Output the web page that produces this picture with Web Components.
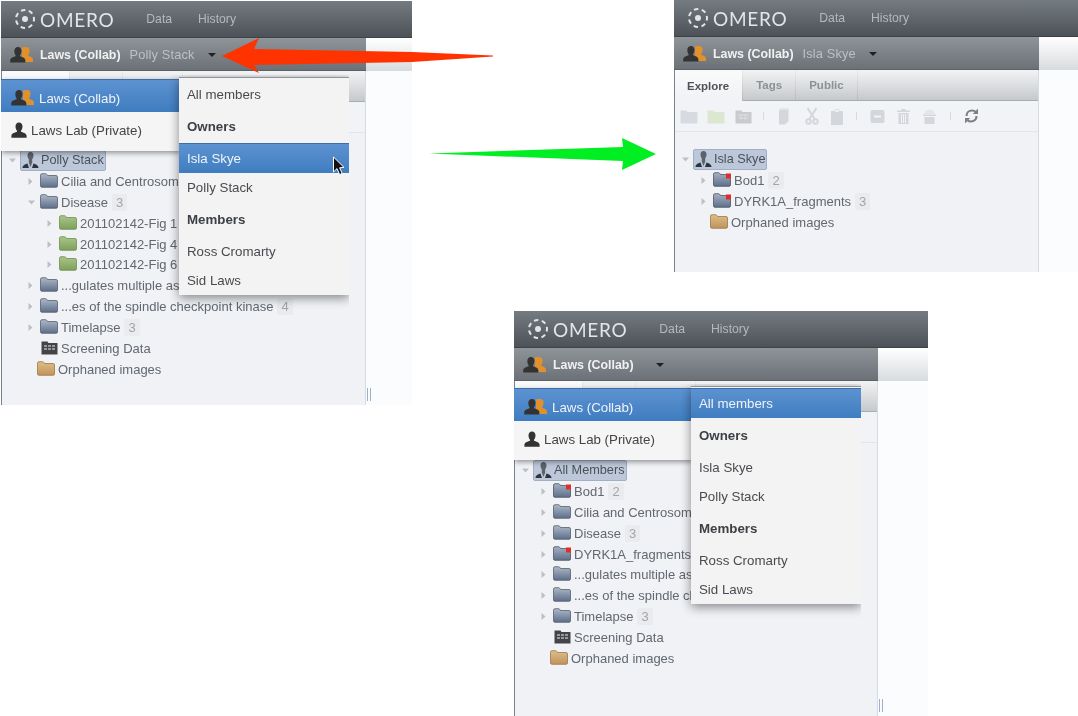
<!DOCTYPE html>
<html>
<head>
<meta charset="utf-8">
<title>OMERO groups</title>
<style>
  html, body { margin: 0; padding: 0; background: #fff; }
  body { font-family: "Liberation Sans", Arial, sans-serif; width: 1078px; height: 716px; overflow: hidden; }
  #desk { position: relative; width: 1078px; height: 716px; overflow: hidden; }
</style>
</head>
<body>
<div id="desk">
  <omero-window style="left:1px;top:1px;width:411px;height:404px" user="Polly Stack" panel="365" covered>
    <tree-row level="0" kind="suit" label="Polly Stack" toggle="open"></tree-row>
    <tree-row level="1" kind="folder" label="Cilia and Centrosom" toggle="closed"></tree-row>
    <tree-row level="1" kind="folder" label="Disease" count="3" toggle="open"></tree-row>
    <tree-row level="2" kind="green" label="201102142-Fig 1" toggle="closed"></tree-row>
    <tree-row level="2" kind="green" label="201102142-Fig 4" toggle="closed"></tree-row>
    <tree-row level="2" kind="green" label="201102142-Fig 6" toggle="closed"></tree-row>
    <tree-row level="1" kind="folder" label="...gulates multiple as" toggle="closed"></tree-row>
    <tree-row level="1" kind="folder" label="...es of the spindle checkpoint kinase" count="4" toggle="closed"></tree-row>
    <tree-row level="1" kind="folder" label="Timelapse" count="3" toggle="closed"></tree-row>
    <tree-row level="1" kind="plate" label="Screening Data"></tree-row>
    <tree-row level="1" kind="orphan" label="Orphaned images"></tree-row>
    <group-menu slot="menu" style="top:41px"></group-menu>
    <member-menu slot="menu" style="left:177px;top:39px" active="Isla Skye"></member-menu>
  </omero-window>

  <omero-window style="left:674px;top:0;width:404px;height:272px" user="Isla Skye" panel="365" nosplit>
    <tree-row level="0" kind="suit" label="Isla Skye" toggle="open"></tree-row>
    <tree-row level="1" kind="tagged" label="Bod1" count="2" toggle="closed"></tree-row>
    <tree-row level="1" kind="tagged" label="DYRK1A_fragments" count="3" toggle="closed"></tree-row>
    <tree-row level="1" kind="orphan" label="Orphaned images"></tree-row>
  </omero-window>

  <omero-window style="left:514px;top:311px;width:414px;height:405px" user="" panel="364" covered>
    <tree-row level="0" kind="suit" label="All Members" toggle="open"></tree-row>
    <tree-row level="1" kind="tagged" label="Bod1" count="2" toggle="closed"></tree-row>
    <tree-row level="1" kind="folder" label="Cilia and Centrosom" toggle="closed"></tree-row>
    <tree-row level="1" kind="folder" label="Disease" count="3" toggle="closed"></tree-row>
    <tree-row level="1" kind="tagged" label="DYRK1A_fragments" toggle="closed"></tree-row>
    <tree-row level="1" kind="folder" label="...gulates multiple as" toggle="closed"></tree-row>
    <tree-row level="1" kind="folder" label="...es of the spindle ch" toggle="closed"></tree-row>
    <tree-row level="1" kind="folder" label="Timelapse" count="3" toggle="closed"></tree-row>
    <tree-row level="1" kind="plate" label="Screening Data"></tree-row>
    <tree-row level="1" kind="orphan" label="Orphaned images"></tree-row>
    <group-menu slot="menu" style="top:40px"></group-menu>
    <member-menu slot="menu" style="left:176px;top:38px" active="All members"></member-menu>
  </omero-window>

  <flow-arrow style="left:222px;top:38px" kind="red"></flow-arrow>
  <flow-arrow style="left:429px;top:138px" kind="green"></flow-arrow>
  <svg style="position:absolute;left:332px;top:156px" width="13" height="20" viewBox="0 0 13 20">
    <path d="M1.500 1 V16 L5 12.600 L7.600 18.600 L10.200 17.400 L7.600 11.800 L12 11.400 Z" fill="#111" stroke="#fff" stroke-width="1"/>
  </svg>
</div>

<script>
const ICONS = {
  person: `<svg width="18" height="17" viewBox="0 0 18 17"><path d="M9 0.500c2.300 0 3.500 1.800 3.500 4 0 1.800-.8 3.300-1.500 4.200v1.100c1.600.8 5.600 1.200 5.600 4.200v1.800H1.400V14c0-3 4-3.400 5.600-4.200V8.700C6.300 7.800 5.500 6.300 5.500 4.500c0-2.200 1.200-4 3.500-4z" fill="#333"/></svg>`,
  group: `<svg width="25" height="18" viewBox="0 0 25 18"><path d="M17.500 1c2 0 3.100 1.700 3.100 3.800 0 1.700-.7 3.100-1.300 4v1c1.300.7 4.700 1.200 4.700 4v2.200H13V1.500C14 1 15.800 1 17.500 1z" fill="#e0912c"/><path d="M9 1c2.300 0 3.500 1.800 3.500 4 0 1.800-.8 3.300-1.500 4.200v1.100c1.600.8 5.400 1.200 5.400 4.200v1.900H1.200v-1.900c0-3 3.800-3.400 5.400-4.200V9.200C5.900 8.300 5.300 6.800 5.300 5c0-2.200 1.400-4 3.700-4z" fill="#333"/></svg>`,
  suit: `<svg width="19" height="19" viewBox="0 0 19 19"><path d="M9.500 1c2 0 3 1.500 3 3.500 0 1.700-.7 3-1.300 3.800v3.200L9.500 16 7.800 11.500V8.300C7.200 7.500 6.500 6.200 6.500 4.500 6.500 2.500 7.500 1 9.500 1z" fill="#5b6269"/><path d="M6.500 12.500 8 17H1.500c0-2.500 2.500-3.700 5-4.500zM12.500 12.500 11 17h6.500c0-2.500-2.500-3.700-5-4.500z" fill="#2f3439"/></svg>`,
  folder: folder('#aeb9c9', '#5d6e89', '#505a69'),
  green: folder('#a9c68a', '#7da05a', '#6a8a4e'),
  orphan: folder('#e0bd88', '#c0935a', '#947343'),
  tagged: folder('#a6b2c3', '#5e6f89', '#454e5c', true),
  plate: `<svg width="17" height="15" viewBox="0 0 17 15"><path d="M0.500 1.500h6l1 1.500h9v11.500h-16z" fill="#434446"/><g fill="#97999b"><rect x="3" y="5" width="3" height="2"/><rect x="7" y="5" width="3" height="2"/><rect x="11" y="5" width="3" height="2"/><rect x="3" y="8" width="3" height="2"/><rect x="7" y="8" width="3" height="2"/><rect x="11" y="8" width="3" height="2"/></g></svg>`
};

function folder(light, dark, line, tag) {
  return `<svg width="18" height="15" viewBox="0 0 18 15">
    <defs><linearGradient id="f" x1="0" y1="0" x2="0" y2="1"><stop offset="0" stop-color="${light}"/><stop offset="1" stop-color="${dark}"/></linearGradient></defs>
    <path d="M.5 2.200q0-1.500 1.500-1.500h3.500q1 0 1.500 1l.5.800h8.500q1.500 0 1.500 1.500v8.800q0 1.500-1.500 1.500H2q-1.500 0-1.500-1.500z" fill="url(#f)" stroke="${line}" stroke-opacity=".75"/>
    ${tag ? '<rect x="13" y="1.500" width="5" height="5" fill="#e02c2c"/>' : ''}
  </svg>`;
}

class OmeroLogo extends HTMLElement {
  constructor() {
    super();
    this.attachShadow({ mode: 'open' }).innerHTML = `
      <style>
        :host { display: flex; align-items: center; gap: 4px; color: #e2e5e7; }
        span { font: 400 19px/1 Lato, "Liberation Sans", sans-serif; letter-spacing: .7px; }
      </style>
      <svg width="22" height="22" viewBox="0 0 22 22">
        <circle cx="11" cy="11" r="9" fill="none" stroke="#e2e5e7" stroke-width="2" stroke-dasharray="4.500 3.500" stroke-dashoffset="2"/>
        <circle cx="11" cy="11" r="3" fill="#e2e5e7"/>
      </svg>
      <span>OMERO</span>`;
  }
}

class OmeroWindow extends HTMLElement {
  constructor() {
    super();
    const user = this.getAttribute('user') || '';
    const panel = this.getAttribute('panel') || 365;
    const grip = this.hasAttribute('nosplit') ? '' : '<i class="grip"></i>';
    // the open menus hide the tab labels, only the tab boxes show past them
    const tabs = this.hasAttribute('covered')
      ? '<div class="on" style="width:68px"></div><div style="width:53px"></div><div style="width:60px"></div>'
      : '<div class="on">Explore</div><div>Tags</div><div>Public</div>';
    this.attachShadow({ mode: 'open' }).innerHTML = `
      <style>
        :host { display: block; position: absolute; overflow: hidden; filter: blur(.45px); font-size: 13.100px; }
        .top { height: 37px; box-sizing: border-box; display: flex; align-items: center; padding-left: 13px;
          background: linear-gradient(#747b81, #4c5258); border-bottom: 1px solid #3d4247; }
        nav { display: flex; gap: 26px; margin-left: 32px; font-size: 12.200px; color: #b4b9be; }
        .main { display: flex; height: calc(100% - 37px); }
        .panel { width: ${panel}px; flex: none; box-sizing: border-box; background: #f0f2f6;
          border-left: 1px solid #77828f; border-right: 1px solid #d6dae1; position: relative; }
        .rest { flex: 1; background: #fbfcfd; position: relative; }
        .rest::before { content: ""; display: block; height: 33px; background: linear-gradient(#fff, #d8dbde); }
        .grip { position: absolute; left: 1px; bottom: 4px; width: 2px; height: 13px;
          border-left: 1px solid #9bb0cc; border-right: 1px solid #9bb0cc; }
        .sub { height: 33px; margin: 0 -1px; padding: 1px 0 0 8px; box-sizing: border-box; display: flex; align-items: center;
          background: linear-gradient(#8f9499, #6c7177); border-bottom: 1px solid #5d6268; font-size: 12.800px; }
        .sub b { margin-left: 6px; color: #f0f1f2; font-size: 12.400px; }
        .sub span { margin-left: 9px; color: #bcc0c4; letter-spacing: .15px; }
        .caret { margin-left: 13px; width: 0; height: 0; border: 4px solid transparent; border-top: 4px solid #1f2123; border-bottom: 0; }
        .tabs { height: 31px; box-sizing: border-box; display: flex; background: linear-gradient(#f2f3f4, #c6c9cc);
          border-bottom: 1px solid #a9acb0; }
        .tabs div { display: flex; align-items: center; box-sizing: border-box; padding: 0 13px; font-size: 11.500px; font-weight: 700;
          color: #8c9197; border-right: 1px solid; border-image: linear-gradient(#eceded, #b4b7bb) 1; }
        .tabs .on { color: #4f5358; background: linear-gradient(#fafafa, #f0f2f5); height: 31px; padding: 0 13px 0 12px; }
        tool-bar { border-bottom: 1px solid #e3e5ea; }
        .tree { padding-top: 17px; }
      </style>
      <div class="top"><omero-logo></omero-logo><nav><span>Data</span><span>History</span></nav></div>
      <div class="main">
        <div class="panel">
          <div class="sub"><omero-icon name="group"></omero-icon><b>Laws (Collab)</b><span>${user}</span><i class="caret"></i></div>
          <div class="tabs">${tabs}</div>
          <tool-bar></tool-bar>
          <div class="tree"><slot></slot></div>
          <slot name="menu"></slot>
        </div>
        <div class="rest">${grip}</div>
      </div>`;
  }
}

class OmeroIcon extends HTMLElement {
  constructor() {
    super();
    this.attachShadow({ mode: 'open' }).innerHTML = `
      <style>:host { display: inline-flex; flex: none; } svg { display: block; }</style>
      ${ICONS[this.getAttribute('name')]}`;
  }
}

class ToolBar extends HTMLElement {
  constructor() {
    super();
    const c = '#d3d6da';
    this.attachShadow({ mode: 'open' }).innerHTML = `
      <style>
        :host { display: flex; align-items: center; height: 30px; padding-left: 5px; background: #f2f3f6; }
        svg { display: block; flex: none; }
        .sep { width: 1px; height: 8px; background: #d8dade; flex: none; }
      </style>
      <svg width="18" height="15" viewBox="0 0 18 15"><path d="M.5 1.500h6l1 1.500h10v11.500H.5z" fill="#d7dbe1"/></svg>
      <svg style="margin-left:9px" width="18" height="15" viewBox="0 0 18 15"><path d="M.5 1.500h6l1 1.500h10v11.500H.5z" fill="#dbe7cf"/></svg>
      <svg style="margin-left:10px" width="17" height="15" viewBox="0 0 17 15"><path d="M.5 1.500h6l1 1.500h9v11.500H.5z" fill="#c8cacc"/><path d="M3 6h11M3 9h11M6 5v6M10 5v6" stroke="#dcdde0"/></svg>
      <i class="sep" style="margin-left:11px"></i>
      <svg style="margin-left:14px" width="15" height="18" viewBox="0 0 15 18"><path d="M2 1h8l1 1v13H2z" fill="#e3e5e8"/><path d="M1 3h9v11.500l-3 3H1z" fill="${c}"/></svg>
      <svg style="margin-left:12px" width="14" height="18" viewBox="0 0 14 18"><g stroke="${c}" stroke-width="2" fill="none"><path d="M2.500 1 10 12.500M11.500 1 4 12.500"/><circle cx="3.500" cy="14.500" r="2.200"/><circle cx="10.500" cy="14.500" r="2.200"/></g></svg>
      <svg style="margin-left:11px" width="14" height="17" viewBox="0 0 14 17"><path d="M1 3h3.500V1.500h5V3H13v14H1z" fill="${c}"/><rect x="5" y="2" width="4" height="2" fill="#eceef1"/></svg>
      <i class="sep" style="margin-left:12px"></i>
      <svg style="margin-left:13px" width="15" height="15" viewBox="0 0 15 15"><rect x=".5" y="1" width="14" height="13" rx="2" fill="${c}"/><rect x="4" y="6.500" width="7" height="2" fill="#f4f5f7"/></svg>
      <svg style="margin-left:11px" width="15" height="16" viewBox="0 0 15 16"><path d="M1 2.500h4.500V1h4v1.500H14v1.500H1zM2.500 5h10v11h-10z" fill="${c}"/><path d="M5.500 6v9M7.500 6v9M9.500 6v9" stroke="#f2f3f6"/></svg>
      <svg style="margin-left:11px" width="15" height="16" viewBox="0 0 15 16"><path d="M2 6C3 2.500 5 1.500 7.500 1.500S12 2.500 13 6z" fill="#e4e6e9"/><path d="M1 6.500h13V8H1zM2.500 9h10v7h-10z" fill="${c}"/></svg>
      <i class="sep" style="margin-left:13px"></i>
      <svg style="margin-left:13px" width="15" height="16" viewBox="0 0 15 16"><g fill="none" stroke="#7d8186" stroke-width="2.200"><path d="M2.500 8C2.500 4.500 5 2.500 8 2.500c1.600 0 2.600.4 3.500 1.300"/><path d="M12.500 8c0 3.500-2.500 5.500-5.500 5.500-1.600 0-2.600-.4-3.500-1.300"/></g><path d="M14 .5v5.500H8.800zM1 15.500V10h5.200z" fill="#7d8186"/></svg>`;
  }
}

class TreeRow extends HTMLElement {
  constructor() {
    super();
    const level = +this.getAttribute('level');
    const kind = this.getAttribute('kind');
    const label = this.getAttribute('label');
    const count = this.getAttribute('count');
    const toggle = this.getAttribute('toggle');
    const tw = kind === 'orphan' ? 7 : kind === 'plate' ? 11 : level === 0 ? 9 : 10;
    let t = '';
    if (toggle === 'closed') t = '<svg width="5" height="7" viewBox="0 0 5 7"><path d="M.5 0 4.500 3.500.5 7z" fill="#bcc0c6"/></svg>';
    if (toggle === 'open') t = '<svg width="7" height="5" viewBox="0 0 7 5"><path d="M0 .5h7L3.500 4.500z" fill="#bcc0c6"/></svg>';
    this.attachShadow({ mode: 'open' }).innerHTML = `
      <style>
        :host { display: flex; align-items: center; height: 20.900px; padding-left: ${9 + 19 * level}px; color: #62686f; white-space: nowrap; font-size: 13px; }
        .t { width: ${tw}px; flex: none; display: flex; }
        .t svg { margin-left: -2.500px; }
        .lab { display: flex; align-items: center; gap: 3px; }
        .lab omero-icon { margin-bottom: 2px; }
        .root { height: 21px; box-sizing: border-box; padding: 0 1px 0 0; background: #bcc8d9; border: 1px solid #9fafc5; border-radius: 2px; gap: 1px; color: #4b5159; font-size: 12.700px; }
        .root omero-icon { margin-bottom: 0; }
        .n { margin-left: 4px; padding: 0 4px; line-height: 17px; background: #e9ebef; color: #a2a5aa; border-radius: 2px; }
      </style>
      <span class="t">${t}</span>
      <span class="lab ${level === 0 ? 'root' : ''}"><omero-icon name="${kind}"></omero-icon><span>${label}</span></span>
      ${count ? `<span class="n">${count}</span>` : ''}`;
  }
}

const BLUE = 'background: linear-gradient(#5d92d1, #3f7dc0); border-top: 1px solid #3b6fa8; color: #eef3f9;';

class GroupMenu extends HTMLElement {
  constructor() {
    super();
    this.attachShadow({ mode: 'open' }).innerHTML = `
      <style>
        :host { display: block; position: absolute; left: -1px; width: 178px; height: 72px;
          background: #f5f5f5; box-shadow: 1px 2px 5px rgba(0,0,0,.4); z-index: 2; font-size: 13.300px; color: #444; }
        div { display: flex; align-items: center; box-sizing: border-box; padding-left: 9px; }
        .on { height: 33px; padding-top: 4px; ${BLUE} }
        .on span { margin-left: 4px; }
        .off { height: 36px; }
        .off span { margin-left: 3px; }
      </style>
      <div class="on"><omero-icon name="group"></omero-icon><span>Laws (Collab)</span></div>
      <div class="off"><omero-icon name="person"></omero-icon><span>Laws Lab (Private)</span></div>`;
  }
}

class MemberMenu extends HTMLElement {
  constructor() {
    super();
    const active = this.getAttribute('active');
    const rows = [['All members', 30], ['Owners', 34, 1], ['Isla Skye', 30], ['Polly Stack', 29], ['Members', 34, 1], ['Ross Cromarty', 30], ['Sid Laws', 29]];
    this.attachShadow({ mode: 'open' }).innerHTML = `
      <style>
        :host { display: block; position: absolute; width: 170px; z-index: 3; font-size: 13.300px; color: #484b4f;
          clip-path: inset(-2px 0 -20px -10px); }
        .box { background: #f3f3f3; box-shadow: 0 3px 10px rgba(0,0,0,.45); border-top: 1px solid #8f9499; padding-top: 1px; }
        div div { display: flex; align-items: center; padding-left: 8px; box-sizing: border-box; }
        .h { font-weight: 700; color: #3d4044; }
        .on { ${BLUE} }
      </style>
      <div class="box">${rows.map(([t, h, head]) =>
        `<div class="${head ? 'h' : ''} ${t === active ? 'on' : ''}" style="height:${h}px">${t}</div>`).join('')}</div>`;
  }
}

class FlowArrow extends HTMLElement {
  constructor() {
    super();
    const red = this.getAttribute('kind') === 'red';
    this.attachShadow({ mode: 'open' }).innerHTML = red ? `
      <style>:host { position: absolute; display: block; z-index: 5; } svg { display: block; }</style>
      <svg width="272" height="36" viewBox="0 0 272 36"><path d="M0 18 37 0 32 11 190 14 271 17.500V18.500L190 24 32 27 37 35z" fill="#fe3300"/></svg>` : `
      <style>:host { position: absolute; display: block; z-index: 5; } svg { display: block; }</style>
      <svg width="228" height="33" viewBox="0 0 228 33"><path d="M0 15.500 194 9 193 0 227 16 193 32 194 23z" fill="#00ee22"/></svg>`;
  }
}

customElements.define('omero-logo', OmeroLogo);
customElements.define('omero-icon', OmeroIcon);
customElements.define('tool-bar', ToolBar);
customElements.define('tree-row', TreeRow);
customElements.define('group-menu', GroupMenu);
customElements.define('member-menu', MemberMenu);
customElements.define('flow-arrow', FlowArrow);
customElements.define('omero-window', OmeroWindow);
</script>
</body>
</html>
